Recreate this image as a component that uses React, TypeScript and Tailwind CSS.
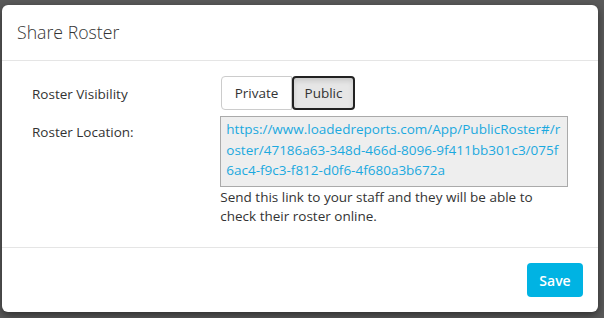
export default function App() {
  return (
    <div className="w-[604px] h-[318px] bg-[#5a5a5a] pt-[5px] pl-[2px] overflow-hidden" style={{ fontFamily: "'Open Sans', Lato, sans-serif" }}>
      <div className="w-[596px] h-[307px] bg-white rounded-[6px] flex flex-col shadow-[0_3px_9px_rgba(0,0,0,0.5)]">
        {/* Header */}
        <div className="h-[56px] border-b border-[#e5e5e5] flex items-center px-[15px]">
          <h4 className="text-[17.7px] text-[#333] font-light">Share Roster</h4>
        </div>

        {/* Body */}
        <div className="flex-1 px-[30px] pt-[15px] text-[13.5px] text-[#333]">
          <div className="flex items-center">
            <div className="w-[189px] pt-[2px]">Roster Visibility</div>
            <div className="flex">
              <button className="h-[34px] w-[71px] border border-[#ccc] rounded-l-[4px] bg-white text-[#333]">Private</button>
              <button className="h-[34px] w-[63px] border-2 border-[#222] rounded-[4px] bg-[#e6e6e6] text-[#333] shadow-[inset_0_3px_5px_rgba(0,0,0,0.125)]">Public</button>
            </div>
          </div>
          <div className="flex mt-[6px]">
            <div className="w-[189px] pt-[6px]">Roster Location:</div>
            <div className="w-[349px]">
              <div className="bg-[#eee] border border-[#aaa] pl-[5px] pr-[2px] pt-[2px] pb-[4px] h-[71px] leading-[20.5px] text-[#1ba9df] break-all">
                https://www.loadedreports.com/App/PublicRoster#/roster/47186a63-348d-466d-8096-9f411bb301c3/075f6ac4-f9c3-f812-d0f6-4f680a3b672a
              </div>
              <p className="leading-[19px] mt-[1px] pr-[20px]">Send this link to your staff and they will be able to check their roster online.</p>
            </div>
          </div>
        </div>

        {/* Footer */}
        <div className="h-[65px] border-t border-[#e5e5e5] flex items-center justify-end px-[15px]">
          <button className="h-[34px] w-[56px] rounded-[4px] bg-[#00b3e3] text-white text-[14px] font-semibold">Save</button>
        </div>
      </div>
    </div>
  );
}
